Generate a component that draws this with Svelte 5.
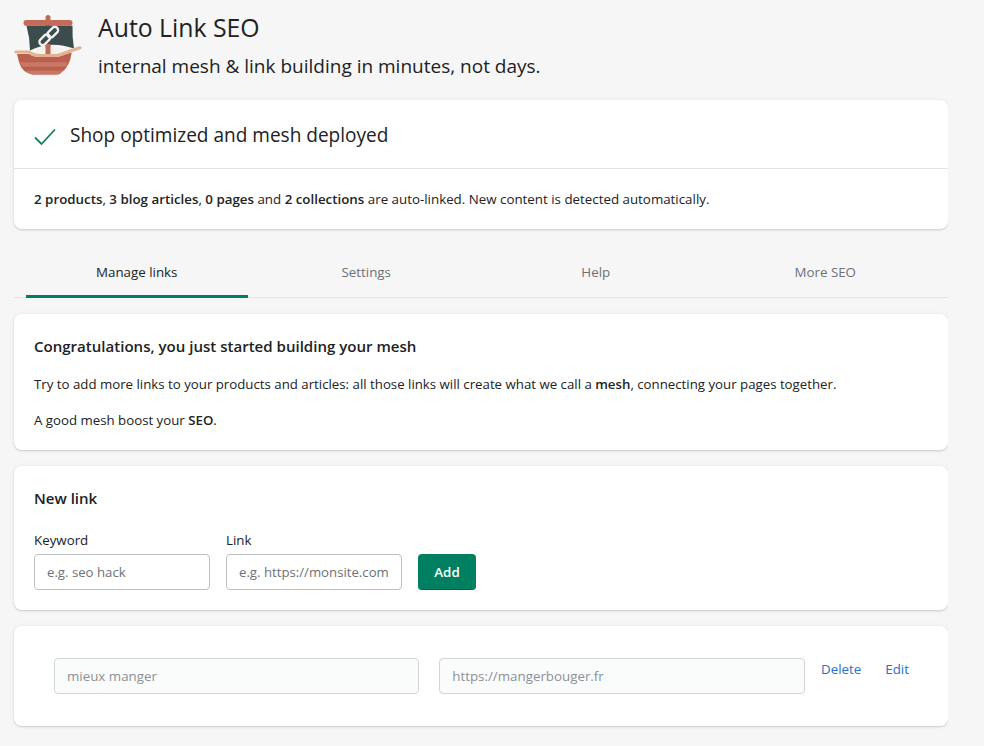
<script>
	const tabs = ['Manage links', 'Settings', 'Help', 'More SEO']
	let selected = 0
	let keyword = ''
	let link = ''
</script>

<div class="page">
	<header class="header">
		<svg class="logo" width="68" height="60" viewBox="14 15 68 60">
			<rect x="45.500" y="15" width="5" height="40" rx="2.500" fill="#bd6a58" />
			<rect x="23.500" y="20" width="49" height="5.700" rx="2.800" fill="#c46b5a" />
			<path d="M32 52 Q48 42 66 50 L60 57 H36 Z" fill="#f5f2ee" />
			<path d="M26.500 25.700 H72.500 Q72 36 74 48.500 Q50 40 30 50.500 Q30 38 26.500 25.700 Z" fill="#3c4b4b" />
			<rect x="45.500" y="44" width="5" height="11" fill="#bd6a58" />
			<g fill="none" stroke="#f2f2f2" stroke-width="2.300">
				<rect x="41.500" y="33.500" width="6.500" height="12.500" rx="3.250" transform="rotate(45 44.750 39.750)" />
				<rect x="49.500" y="26" width="6.500" height="12.500" rx="3.250" transform="rotate(45 52.750 32.250)" />
			</g>
			<path d="M17 54 H29 Q33 57 40 57 H57 Q62 56 66 54 L71.700 52.500 Q70 66 62 72 Q60 74.500 57 74.500 H33 Q22 73 19 62 Z" fill="#b9604f" />
			<path d="M20 62.300 H68 L66 66.700 H22.500 Z" fill="#cb7766" />
			<path d="M25.500 70.700 H62.500 Q60 74.500 57 74.500 H33 Q28 74 25.500 70.700 Z" fill="#cb7766" />
			<path d="M15.800 52 H29 Q33 55.300 40 55.500 H57 Q62 54.500 66 52.500 L80 47.800" fill="none" stroke="#e3b28e" stroke-width="3.200" stroke-linecap="round" />
		</svg>
		<div class="titles">
			<h1>Auto Link SEO</h1>
			<p>internal mesh &amp; link building in minutes, not days.</p>
		</div>
	</header>

	<section class="card banner">
		<div class="banner-head">
			<svg width="22" height="18" viewBox="0 0 22 18">
				<path d="M1 9.500 L7.500 16 L21 1.500" fill="none" stroke="#108060" stroke-width="1.800" />
			</svg>
			<h2>Shop optimized and mesh deployed</h2>
		</div>
		<div class="banner-body">
			<b>2 products</b>, <b>3 blog articles</b>, <b>0 pages</b> and <b>2 collections</b> are auto-linked. New content is detected automatically.
		</div>
	</section>

	<nav class="tabs">
		{#each tabs as tab, i}
			<button class="tab" class:active={selected === i} onclick={() => (selected = i)}>
				<span>{tab}</span>
			</button>
		{/each}
	</nav>

	<section class="card intro">
		<h3>Congratulations, you just started building your mesh</h3>
		<p>Try to add more links to your products and articles: all those links will create what we call a <b>mesh</b>, connecting your pages together.</p>
		<p>A good mesh boost your <b>SEO</b>.</p>
	</section>

	<section class="card new-link">
		<h3>New link</h3>
		<form class="form" onsubmit={(e) => e.preventDefault()}>
			<label>
				<span>Keyword</span>
				<input type="text" placeholder="e.g. seo hack" bind:value={keyword} />
			</label>
			<label>
				<span>Link</span>
				<input type="text" placeholder="e.g. https://monsite.com" bind:value={link} />
			</label>
			<button class="add" type="submit">Add</button>
		</form>
	</section>

	<section class="card row">
		<input class="ro" type="text" value="mieux manger" disabled />
		<input class="ro" type="text" value="https://mangerbouger.fr" disabled />
		<div class="actions">
			<a href="#delete">Delete</a>
			<a href="#edit">Edit</a>
		</div>
	</section>
</div>

<style>
	:global(body) {
		margin: 0;
		background: #f6f6f7;
		color: #202223;
		font-family: "Open Sans", "Noto Sans", sans-serif;
		font-size: 13.330px;
	}
	.page {
		width: 934px;
		height: 746px;
		overflow: hidden;
		padding-left: 14px;
		display: flex;
		flex-direction: column;
	}
	.header {
		display: flex;
		height: 100px;
		flex-shrink: 0;
		box-sizing: border-box;
		padding-top: 15px;
	}
	.logo {
		flex-shrink: 0;
		margin-right: 16px;
	}
	.titles {
		margin-top: -3px;
	}
	h1 {
		margin: 0;
		font-size: 24.800px;
		font-weight: 400;
		line-height: 30px;
	}
	.titles p {
		margin: 12px 0 0;
		font-size: 19px;
		line-height: 24px;
	}
	.card {
		background: #fff;
		border-radius: 8px;
		box-shadow: 0 0 5px rgba(23, 24, 24, 0.05), 0 1px 2px rgba(0, 0, 0, 0.15);
		box-sizing: border-box;
		flex-shrink: 0;
	}
	.banner {
		height: 129px;
	}
	.banner-head {
		height: 69px;
		box-sizing: border-box;
		border-bottom: 1px solid #e1e3e5;
		display: flex;
		align-items: center;
		padding-left: 20px;
	}
	.banner-head svg {
		margin: 6px 14px 0 0;
	}
	h2 {
		margin: 0;
		font-size: 19.050px;
		font-weight: 400;
		position: relative;
		top: 1px;
	}
	.banner-body {
		padding: 21px 20px 0;
		line-height: 18px;
	}
	b {
		font-weight: 600;
	}
	.tabs {
		display: flex;
		flex-shrink: 0;
		margin-top: 16px;
		height: 52px;
		padding: 0 8px;
		border-bottom: 1px solid #e1e3e5;
	}
	.tab {
		flex: 1;
		background: none;
		border: 0;
		padding: 0 4px;
		font: inherit;
		color: #6d7175;
		height: 53px;
	}
	.tab span {
		display: block;
		height: 53px;
		line-height: 54px;
		box-sizing: border-box;
	}
	.tab.active {
		color: #202223;
	}
	.tab.active span {
		border-bottom: 3px solid #008060;
		border-radius: 3px 3px 0 0;
	}
	.intro {
		margin-top: 16px;
		height: 136px;
		padding: 22px 20px 0;
	}
	h3 {
		margin: 0;
		font-size: 15.050px;
		font-weight: 600;
		line-height: 20px;
	}
	.intro p {
		margin: 0;
		font-size: 13.260px;
		line-height: 18px;
	}
	.intro h3 + p {
		margin-top: 19px;
	}
	.intro p + p {
		margin-top: 18px;
	}
	.new-link {
		margin-top: 16px;
		height: 144px;
		padding: 22px 20px 0;
	}
	.form {
		display: flex;
		align-items: flex-end;
		gap: 16px;
		margin-top: 23px;
	}
	label {
		display: flex;
		flex-direction: column;
		gap: 5px;
		line-height: 18px;
	}
	label input {
		width: 176px;
		font-size: 13.200px;
	}
	input {
		height: 36px;
		box-sizing: border-box;
		border: 1px solid #babfc3;
		border-radius: 4px;
		padding: 0 12px;
		font: inherit;
		color: #202223;
		background: #fff;
		outline: none;
	}
	input::placeholder {
		color: #6d7175;
		opacity: 1;
	}
	.add {
		height: 36px;
		width: 58px;
		border: 0;
		border-radius: 4px;
		background: #008060;
		color: #fff;
		font: inherit;
		font-weight: 600;
		box-shadow: inset 0 -1px 0 rgba(0, 0, 0, 0.2);
	}
	.row {
		margin-top: 16px;
		height: 100px;
		padding: 32px 39px 0 40px;
		display: flex;
		align-items: flex-start;
		gap: 20px;
	}
	.ro {
		flex: 1;
		min-width: 0;
		background: #fafbfb;
		border-color: #d2d5d8;
		color: #8c9196;
	}
	.actions {
		display: flex;
		gap: 24px;
		margin-left: -3.500px;
		line-height: 22px;
	}
	a {
		color: #2c6ecb;
		text-decoration: none;
	}
</style>
